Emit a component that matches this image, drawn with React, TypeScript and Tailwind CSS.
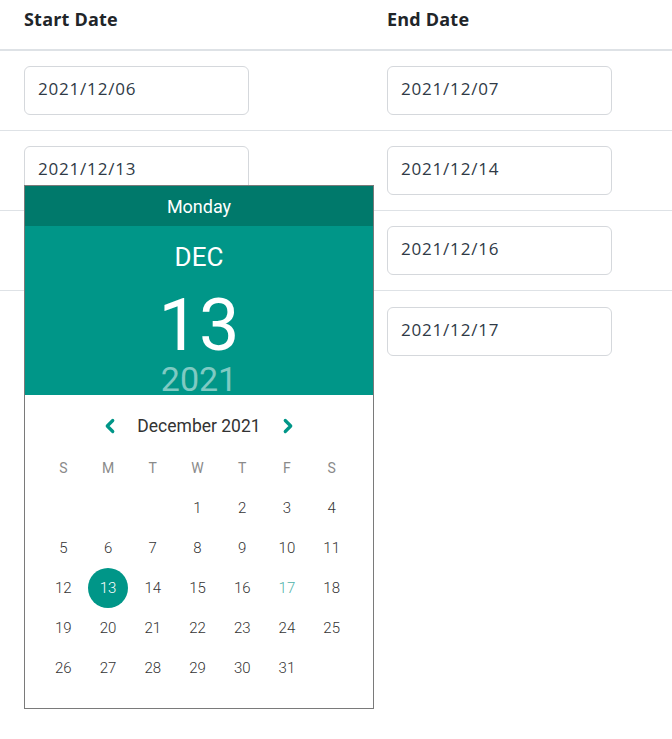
import { ChevronLeft, ChevronRight } from "lucide-react";

const rows = [
  ["2021/12/06", "2021/12/07"],
  ["2021/12/13", "2021/12/14"],
  ["", "2021/12/16"],
  ["", "2021/12/17"],
];

const weekdays = ["S", "M", "T", "W", "T", "F", "S"];

const days: (number | null)[] = [null, null, null, 1, 2, 3, 4];
for (let d = 5; d <= 31; d++) days.push(d);

function DateInput({ value }: { value: string }) {
  return (
    <div className="flex h-[49px] w-[225px] items-center rounded-[6px] border border-[#d5d8dc] bg-white pb-[3px] pl-[13px] text-[17px] tracking-[0.8px] text-[#2f3a46]">
      {value}
    </div>
  );
}

function Picker() {
  return (
    <div className="absolute left-0 top-[39px] z-10 w-[350px] border border-[#7a7a7a] bg-white font-['Roboto',sans-serif]">
      <div className="flex h-[40px] items-center justify-center bg-[#00796b] text-[18px] text-white">Monday</div>
      <div className="flex h-[169px] flex-col items-center overflow-hidden bg-[#009688] text-white">
        <div className="mt-[16px] text-[26px] leading-[30px]">DEC</div>
        <div className="mt-[18px] text-[72px] leading-[72px]">13</div>
        <div className="-mt-[1px] text-[34px] leading-[36px] text-white/50">2021</div>
      </div>
      <div className="pb-[20px] pl-[16px] pr-[19px] pt-[11px]">
        <div className="flex h-[40px] items-center justify-center pl-[3px] text-[17.5px] text-[#333]">
          <ChevronLeft size={22} strokeWidth={3.5} className="mr-[8px] text-[#009688]" />
          <span className="w-[140px] text-center">December 2021</span>
          <ChevronRight size={22} strokeWidth={3.5} className="ml-[8px] text-[#009688]" />
        </div>
        <div className="mt-[2px] grid grid-cols-7">
          {weekdays.map((w, i) => (
            <div key={i} className="flex h-[40px] items-center justify-center text-[14px] text-[#8a8a8a]">
              {w}
            </div>
          ))}
          {days.map((d, i) => (
            <div key={i} className="flex h-[40px] items-center justify-center">
              {d === 13 ? (
                <span className="flex size-[40px] items-center justify-center rounded-full bg-[#009688] text-[15px] font-light text-white">13</span>
              ) : (
                <span className={d === 17 ? "text-[15px] font-light text-[#4fb3aa]" : "text-[15px] font-light text-[#333]"}>{d ?? ""}</span>
              )}
            </div>
          ))}
        </div>
      </div>
    </div>
  );
}

export default function App() {
  return (
    <div className="h-[739px] w-[672px] bg-white font-['Open_Sans','Noto_Sans',sans-serif]">
      <div className="grid h-[51px] grid-cols-[363px_1fr] items-start border-b-2 border-[#dee2e6] pt-[6px] text-[18px] font-bold tracking-[0.2px] text-[#212529]">
        <div className="pl-6">Start Date</div>
        <div className="pl-6">End Date</div>
      </div>
      {rows.map((r, i) => (
        <div key={i} className={`grid h-[80px] grid-cols-[363px_1fr] items-center ${i < 3 ? "border-b border-[#dee2e6]" : ""}`}>
          <div className="relative pl-6">
            {r[0] ? (
              <div className="relative">
                <DateInput value={r[0]} />
                {i === 1 ? <Picker /> : null}
              </div>
            ) : null}
          </div>
          <div className="pl-6">
            <DateInput value={r[1]} />
          </div>
        </div>
      ))}
    </div>
  );
}
